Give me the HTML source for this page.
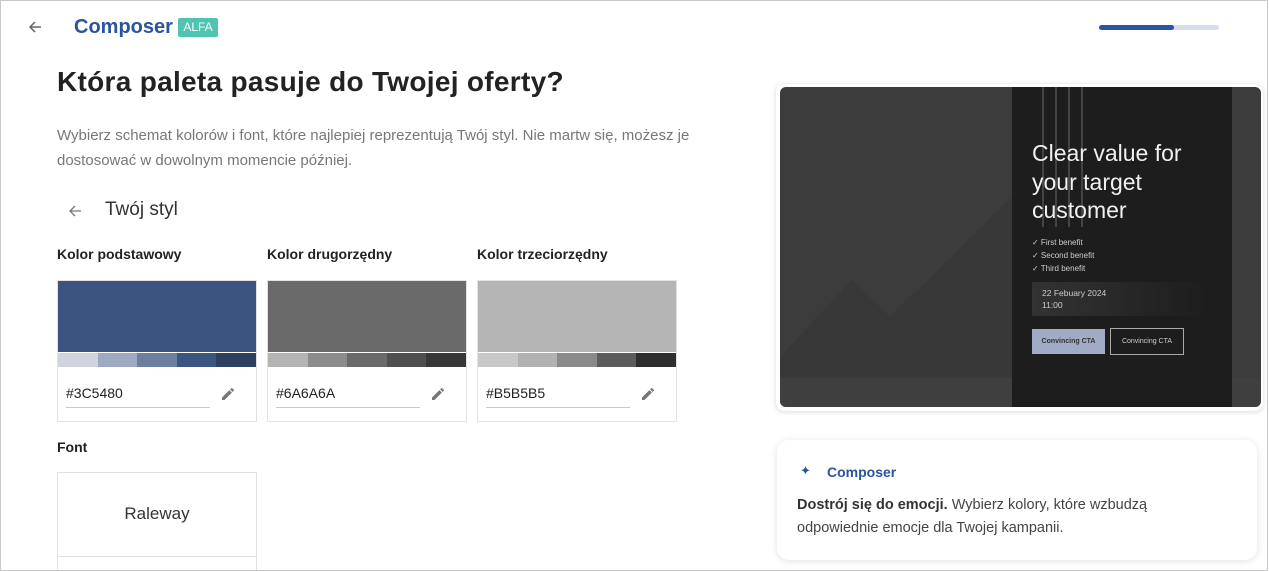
<!DOCTYPE html>
<html><head><meta charset="utf-8"><style>
*{box-sizing:border-box;margin:0;padding:0}
html,body{width:1269px;height:571px;overflow:hidden;background:#fff;font-family:"Liberation Sans",sans-serif;position:relative}
.frame{position:absolute;left:0;top:0;width:1268px;height:571px;border:1px solid #c8c8c8;z-index:10}
.abs{position:absolute}
.lbl{font-size:14px;font-weight:bold;color:#222}
.card{position:absolute;width:200px;height:142px;border:1px solid #e2e2e2;background:#fff}
.card .main{height:71px}
.card .pal{display:flex;height:14px;margin-top:1px}
.card .pal div{flex:1}
.card .hex{position:absolute;left:8px;top:104px;font-size:14px;color:#222}
.card .ul{position:absolute;left:8px;top:126px;width:144px;height:1px;background:#c8c8c8}
.card svg{position:absolute;left:162px;top:105px}
</style></head><body><div class="frame"></div>
<svg class="abs" style="left:27px;top:19px" width="16" height="16" viewBox="0 0 16 16"><path d="M14 8H3M8 3L3 8l5 5" stroke="#666" stroke-width="1.5" fill="none"/></svg>
<div class="abs" style="left:74px;top:16px;font-size:20px;font-weight:bold;color:#2a53a0">Composer</div>
<div class="abs" style="left:178px;top:18px;width:40px;height:19px;background:#4fc4b0;color:#fff;font-size:12px;text-align:center;line-height:19px;border-radius:2px">ALFA</div>
<div class="abs" style="left:1099px;top:25px;width:120px;height:5px;border-radius:3px;background:#d9dcef"></div>
<div class="abs" style="left:1099px;top:25px;width:75px;height:5px;border-radius:3px;background:#2a53a0"></div>

<div class="abs" style="left:57px;top:66px;font-size:28px;font-weight:bold;color:#222;letter-spacing:0.3px">Która paleta pasuje do Twojej oferty?</div>
<div class="abs" style="left:57px;top:123px;width:660px;font-size:15px;line-height:25px;color:#777">Wybierz schemat kolorów i font, które najlepiej reprezentują Twój styl. Nie martw się, możesz je dostosować w dowolnym momencie później.</div>
<svg class="abs" style="left:67px;top:203px" width="16" height="16" viewBox="0 0 16 16"><path d="M14 8H3M8 3L3 8l5 5" stroke="#777" stroke-width="1.3" fill="none"/></svg>
<div class="abs" style="left:105px;top:199px;font-size:19px;color:#333">Twój styl</div>

<div class="abs lbl" style="left:57px;top:246px">Kolor podstawowy</div>
<div class="abs lbl" style="left:267px;top:246px">Kolor drugorzędny</div>
<div class="abs lbl" style="left:477px;top:246px">Kolor trzeciorzędny</div>

<div class="card" style="left:57px;top:280px"><div class="main" style="background:#3c5480"></div><div class="pal"><div style="background:#d0d4e0"></div><div style="background:#9eaac2"></div><div style="background:#6d7f9f"></div><div style="background:#3c5480"></div><div style="background:#2e3f60"></div></div><div class="hex">#3C5480</div><div class="ul"></div><svg width="16" height="16" viewBox="0 0 24 24"><path d="M3 17.25V21h3.75L17.8 9.94l-3.75-3.75L3 17.25zM20.7 7.04a1 1 0 000-1.41l-2.34-2.34a1 1 0 00-1.41 0l-1.83 1.83 3.75 3.75 1.83-1.830z" fill="#777"/></svg></div>
<div class="card" style="left:267px;top:280px"><div class="main" style="background:#6a6a6a"></div><div class="pal"><div style="background:#b4b4b4"></div><div style="background:#8c8c8c"></div><div style="background:#6a6a6a"></div><div style="background:#4f4f4f"></div><div style="background:#383838"></div></div><div class="hex">#6A6A6A</div><div class="ul"></div><svg width="16" height="16" viewBox="0 0 24 24"><path d="M3 17.25V21h3.75L17.8 9.94l-3.75-3.75L3 17.25zM20.7 7.04a1 1 0 000-1.41l-2.34-2.34a1 1 0 00-1.41 0l-1.83 1.83 3.75 3.75 1.83-1.83z" fill="#777"/></svg></div>
<div class="card" style="left:477px;top:280px"><div class="main" style="background:#b5b5b5"></div><div class="pal"><div style="background:#c8c8c8"></div><div style="background:#b2b2b2"></div><div style="background:#8a8a8a"></div><div style="background:#5c5c5c"></div><div style="background:#2e2e2e"></div></div><div class="hex">#B5B5B5</div><div class="ul"></div><svg width="16" height="16" viewBox="0 0 24 24"><path d="M3 17.25V21h3.75L17.8 9.94l-3.75-3.75L3 17.25zM20.7 7.04a1 1 0 000-1.41l-2.34-2.34a1 1 0 00-1.41 0l-1.83 1.83 3.75 3.75 1.83-1.83z" fill="#777"/></svg></div>

<div class="abs lbl" style="left:57px;top:439px">Font</div>
<div class="abs" style="left:57px;top:472px;width:200px;height:110px;border:1px solid #e2e2e2"></div>
<div class="abs" style="left:57px;top:556px;width:200px;height:1px;background:#e2e2e2"></div>
<div class="abs" style="left:57px;top:504px;width:200px;text-align:center;font-size:17px;color:#333">Raleway</div>

<div class="abs" style="left:776px;top:84px;width:487px;height:327px;background:#fff;border-radius:8px;box-shadow:0 1px 6px rgba(0,0,0,.15)"></div>
<div class="abs" style="left:780px;top:87px;width:481px;height:320px;border-radius:6px;overflow:hidden;background:#3c3c3c">
 <svg class="abs" style="left:0;top:0" width="481" height="320"><path d="M0 270 L72 193 L110 230 L232 110 L232 290 L0 290Z" fill="#383838"/><rect x="0" y="291" width="481" height="29" fill="#3f3f3f"/></svg>
 <div class="abs" style="left:232px;top:0;width:220px;height:320px;background:#1d1d1d"></div>
 <div class="abs" style="left:262px;top:0;width:2px;height:140px;background:#444"></div>
 <div class="abs" style="left:275px;top:0;width:2px;height:140px;background:#444"></div>
 <div class="abs" style="left:288px;top:0;width:2px;height:140px;background:#444"></div>
 <div class="abs" style="left:301px;top:0;width:2px;height:140px;background:#444"></div>
 <div class="abs" style="left:252px;top:52px;font-size:23px;line-height:28.5px;color:#f0f0f0">Clear value for<br>your target<br>customer</div>
 <div class="abs" style="left:252px;top:149px;font-size:8px;line-height:13px;color:#ccc">✓ First benefit<br>✓ Second benefit<br>✓ Third benefit</div>
 <div class="abs" style="left:252px;top:195px;width:175px;height:34px;background:linear-gradient(90deg,#333,#1d1d1d)"></div>
 <div class="abs" style="left:262px;top:200px;font-size:8.5px;line-height:12px;color:#ccc">22 Febuary 2024<br>11:00</div>
 <div class="abs" style="left:252px;top:242px;width:73px;height:25px;background:#a0abc6;color:#333;font-size:7px;text-align:center;line-height:25px;font-weight:bold">Convincing CTA</div>
 <div class="abs" style="left:330px;top:241px;width:74px;height:27px;border:1px solid #aaa;color:#ccc;font-size:7px;text-align:center;line-height:25px">Convincing CTA</div>
</div>

<div class="abs" style="left:777px;top:440px;width:480px;height:120px;background:#fff;border-radius:12px;box-shadow:0 1px 8px rgba(0,0,0,.12)"></div>
<div class="abs" style="left:800px;top:463px;font-size:13px;color:#2a53a0">✦</div>
<div class="abs" style="left:827px;top:464px;font-size:14px;font-weight:bold;color:#2a53a0">Composer</div>
<div class="abs" style="left:797px;top:494px;width:430px;font-size:14.5px;line-height:23px;color:#444"><b style="color:#333">Dostrój się do emocji.</b> Wybierz kolory, które wzbudzą odpowiednie emocje dla Twojej kampanii.</div>
</body></html>
